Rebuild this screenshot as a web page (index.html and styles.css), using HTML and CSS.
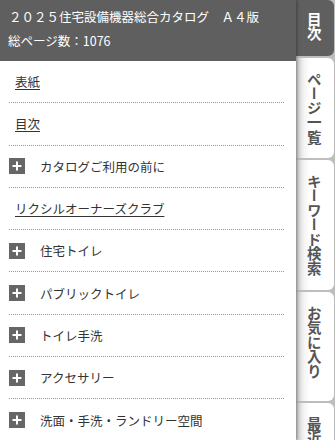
FILE: index.html
```html
<html>
<head>
<meta charset="UTF-8">
<link rel="stylesheet" href="styles.css">
</head>
<body>
<div class="panel">
  <div class="head">
    <div class="title">２０２５住宅設備機器総合カタログ　Ａ４版</div>
    <div class="pages">総ページ数：1076</div>
  </div>
  <ul class="menu">
    <li><a href="#" class="link">表紙</a></li>
    <li><a href="#" class="link">目次</a></li>
    <li><span class="plus"><svg width="16" height="16" viewBox="0 0 16 16"><path d="M8 3.5v9M3.5 8h9" stroke="#fff" stroke-width="2"/></svg></span><span class="label">カタログご利用の前に</span></li>
    <li><a href="#" class="link">リクシルオーナーズクラブ</a></li>
    <li><span class="plus"><svg width="16" height="16" viewBox="0 0 16 16"><path d="M8 3.5v9M3.5 8h9" stroke="#fff" stroke-width="2"/></svg></span><span class="label">住宅トイレ</span></li>
    <li><span class="plus"><svg width="16" height="16" viewBox="0 0 16 16"><path d="M8 3.5v9M3.5 8h9" stroke="#fff" stroke-width="2"/></svg></span><span class="label">パブリックトイレ</span></li>
    <li><span class="plus"><svg width="16" height="16" viewBox="0 0 16 16"><path d="M8 3.5v9M3.5 8h9" stroke="#fff" stroke-width="2"/></svg></span><span class="label">トイレ手洗</span></li>
    <li><span class="plus"><svg width="16" height="16" viewBox="0 0 16 16"><path d="M8 3.5v9M3.5 8h9" stroke="#fff" stroke-width="2"/></svg></span><span class="label">アクセサリー</span></li>
    <li><span class="plus"><svg width="16" height="16" viewBox="0 0 16 16"><path d="M8 3.5v9M3.5 8h9" stroke="#fff" stroke-width="2"/></svg></span><span class="label">洗面・手洗・ランドリー空間</span></li>
  </ul>
</div>
<div class="tabs">
  <div class="tab tab-toc active"><span>目次</span></div>
  <div class="tab tab-list"><span>ページ一覧</span></div>
  <div class="tab tab-search"><span>キーワード検索</span></div>
  <div class="tab tab-fav"><span>お気に入り</span></div>
  <div class="tab tab-recent"><span>最近見たページ</span></div>
</div>
</body>
</html>
```

FILE: styles.css
```css
html, body {
  margin: 0;
  height: 100%;
}

body {
  display: flex;
  width: 335px;
  height: 440px;
  overflow: hidden;
  background: #bdbdbd;
  font-family: "Noto Sans CJK JP", "Noto Sans", sans-serif;
}

/* left side: catalog contents */
.panel {
  width: 296px;
  flex: none;
  background: #fff;
  position: relative;
  z-index: 1;
  box-shadow: 1px 0 3px rgba(0,0,0,0.35);
}

.head {
  background: #5f5f5f;
  color: #fff;
  height: 61px;
  box-sizing: border-box;
  padding: 5px 8px 0 9px;
  font-size: 12.5px;
  line-height: 24px;
}

.pages {
  margin-left: -1px;
}

.menu {
  list-style: none;
  margin: 0 12px 0 9px;
  padding: 0;
}

.menu li {
  display: flex;
  align-items: center;
  height: 42.3px;
  box-sizing: border-box;
  border-bottom: 1px dotted #999;
  font-size: 12.5px;
  color: #333;
}

.link {
  color: #333;
  margin-left: 6px;
  text-decoration: underline;
  text-underline-offset: 2px;
}

.plus {
  width: 16px;
  height: 16px;
  background: #666;
  display: flex;
  flex: none;
}

.label {
  margin-left: 15px;
}

/* right side: vertical tabs */
.tabs {
  flex: 1;
  display: flex;
  flex-direction: column;
  gap: 2px;
  padding-right: 1px;
}

.tab {
  flex: none;
  display: flex;
  justify-content: center;
  box-sizing: border-box;
  padding-top: 14px;
  padding-right: 3px;
  border-radius: 0 6px 6px 0;
  background: linear-gradient(to right, #c4c4c4, #f4f4f4 8px, #fff 14px);
  color: #555;
  font-weight: bold;
  font-size: 14.5px;
  line-height: 1;
  overflow: hidden;
}

.tab span {
  writing-mode: vertical-rl;
}

.tab.active {
  background: #5f5f5f;
  color: #fff;
  padding-top: 12px;
}

.tab-toc { height: 56px; }
.tab-list { height: 100px; }
.tab-search { height: 130px; }
.tab-fav { height: 109px; }
.tab-recent { height: 120px; }
```
